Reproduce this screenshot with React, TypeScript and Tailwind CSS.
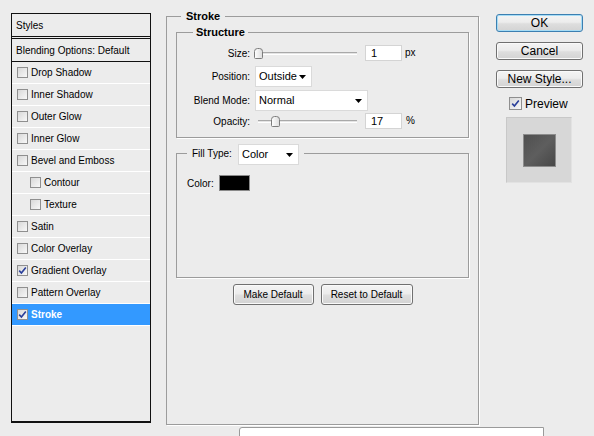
import React from 'react'

const effects = [
  { label: 'Drop Shadow' },
  { label: 'Inner Shadow' },
  { label: 'Outer Glow' },
  { label: 'Inner Glow' },
  { label: 'Bevel and Emboss' },
  { label: 'Contour', sub: true },
  { label: 'Texture', sub: true },
  { label: 'Satin' },
  { label: 'Color Overlay' },
  { label: 'Gradient Overlay', checked: true },
  { label: 'Pattern Overlay' },
  { label: 'Stroke', checked: true, active: true },
]

function CheckMark() {
  return (
    <svg width="9" height="9" viewBox="0 0 9 9">
      <path d="M1.2 4.6 L3.4 7 L7.8 1.4" fill="none" stroke="#2a3f9a" strokeWidth="1.6" />
    </svg>
  )
}

function Checkbox({ checked = false, big = false }: { checked?: boolean; big?: boolean }) {
  return (
    <span
      className={`flex shrink-0 items-center justify-center border border-[#8f8f8f] bg-[linear-gradient(135deg,#d8d8d8,#f8f8f8)] ${
        big ? 'h-[13px] w-[13px]' : 'h-[11px] w-[11px]'
      }`}
    >
      {checked && <CheckMark />}
    </span>
  )
}

function Arrow() {
  return (
    <svg width="7" height="4" viewBox="0 0 7 4">
      <path d="M0 0 H7 L3.5 4 Z" fill="#000" />
    </svg>
  )
}

function Dropdown({ value, className = '' }: { value: string; className?: string }) {
  return (
    <div className={`flex h-[21px] items-center justify-between border border-[#dadada] bg-white pl-[3px] pr-[5px] ${className}`}>
      <span className="text-[11px]">{value}</span>
      <Arrow />
    </div>
  )
}

function Slider({ pct }: { pct: number }) {
  return (
    <div className="relative ml-[3px] flex h-[12px] w-[99px] items-center">
      <div className="h-[3px] w-full border-t border-b border-t-[#a9a9a9] border-b-white bg-[#e4e4e4]" />
      <svg
        className="absolute top-[1px]"
        style={{ left: `${Math.round((pct / 100) * 99) - 4}px` }}
        width="9"
        height="11"
        viewBox="0 0 9 11"
      >
        <defs>
          <linearGradient id={`th${pct}`} x1="0" y1="0" x2="1" y2="0">
            <stop offset="0" stopColor="#ffffff" />
            <stop offset="1" stopColor="#dcdcdc" />
          </linearGradient>
        </defs>
        <path
          d="M3.5 0.5 H5.5 Q8.5 0.5 8.5 3.5 V9.5 Q8.5 10.5 7.5 10.5 H1.5 Q0.5 10.5 0.5 9.5 V3.5 Q0.5 0.5 3.5 0.5 Z"
          fill={`url(#th${pct})`}
          stroke="#7c7c7c"
        />
      </svg>
    </div>
  )
}

function Field({ value }: { value: string }) {
  return (
    <div className="ml-[8px] flex h-[16px] w-[37px] items-center border border-[#d4d4d4] bg-white pl-[5px] text-[11px]">
      {value}
    </div>
  )
}

function Btn({ children, className = '', focus = false }: { children: React.ReactNode; className?: string; focus?: boolean }) {
  return (
    <button
      className={`flex items-center justify-center rounded-[3px] border bg-[linear-gradient(#f4f4f4_0%,#ececec_45%,#dedede_55%,#d3d3d3_100%)] leading-none text-black ${
        focus ? 'border-[#3c7fb1] shadow-[inset_0_0_0_1px_#a6dcf5]' : 'border-[#707070] shadow-[inset_0_0_0_1px_#fafafa]'
      } ${className}`}
    >
      {children}
    </button>
  )
}

export default function App() {
  return (
    <div className="relative flex h-[436px] w-[594px] items-start overflow-hidden bg-[#ececec] font-['Liberation_Sans',Arial,sans-serif] text-[10px] text-black">
      {/* styles list */}
      <div className="ml-[11px] mt-[13px] flex h-[410px] w-[140px] flex-col border border-b-2 border-[#111]">
        <div className="flex h-[23px] items-center border-b border-[#111] pl-[4px]">Styles</div>
        <div className="mt-[1px] flex h-[24px] items-center border-y border-[#111] pl-[4px]">Blending Options: Default</div>
        {effects.map((e) => (
          <div
            key={e.label}
            className={`flex h-[22px] items-center gap-[3px] border-b border-white ${e.sub ? 'pl-[18px]' : 'pl-[5px]'} ${
              e.active ? 'bg-[#3399ff] font-bold text-white' : ''
            }`}
          >
            <Checkbox checked={e.checked} />
            <span>{e.label}</span>
          </div>
        ))}
      </div>

      {/* stroke settings */}
      <div className="relative ml-[15px] mt-[16px] h-[409px] w-[313px] border border-[#9c9c9c] pl-[9px] pt-[15px] shadow-[1px_1px_0_#fff]">
        <span className="absolute -top-[8px] left-[14px] bg-[#ececec] px-[5px] text-[11px] font-bold leading-[14px]">Stroke</span>

        <div className="relative h-[106px] w-[293px] border border-[#9c9c9c] pt-[10px] shadow-[1px_1px_0_#fff]">
          <span className="absolute -top-[8px] left-[16px] bg-[#ececec] px-[3px] text-[11px] font-bold leading-[14px]">Structure</span>

          <div className="flex h-[20px] items-center">
            <span className="w-[73px] text-right">Size:</span>
            <span className="ml-[5px] flex items-center">
              <Slider pct={0} />
              <Field value="1" />
              <span className="-mt-[2px] ml-[3px] text-[10px]">px</span>
            </span>
          </div>
          <div className="mt-[3px] flex h-[21px] items-center">
            <span className="w-[73px] text-right">Position:</span>
            <Dropdown value="Outside" className="ml-[5px] w-[57px]" />
          </div>
          <div className="mt-[3px] flex h-[21px] items-center">
            <span className="w-[73px] text-right">Blend Mode:</span>
            <Dropdown value="Normal" className="ml-[5px] w-[113px]" />
          </div>
          <div className="mt-[1px] flex h-[18px] items-center">
            <span className="w-[73px] text-right">Opacity:</span>
            <span className="ml-[5px] flex items-center">
              <Slider pct={17} />
              <Field value="17" />
              <span className="-mt-[2px] ml-[4px] text-[10px]">%</span>
            </span>
          </div>
        </div>

        <div className="relative mt-[15px] h-[125px] w-[293px] border border-[#9c9c9c] pl-[10px] pt-[21px] shadow-[1px_1px_0_#fff]">
          <div className="absolute -top-[10px] left-[10px] flex items-center bg-[#ececec] px-[5px]">
            <span className="-mt-[2px] w-[41px]">Fill Type:</span>
            <Dropdown value="Color" className="ml-[5px] w-[61px]" />
          </div>
          <div className="flex items-center">
            <span className="w-[27px]">Color:</span>
            <span className="ml-[5px] h-[16px] w-[31px] border border-[#8a8a8a] bg-black" />
          </div>
        </div>

        <div className="mt-[6px] flex w-[293px] justify-center gap-[7px]">
          <Btn className="h-[21px] w-[81px] text-[10px]">Make Default</Btn>
          <Btn className="h-[21px] w-[92px] text-[10px]">Reset to Default</Btn>
        </div>
      </div>

      {/* dialog buttons */}
      <div className="ml-[17px] mt-[14px] flex w-[87px] flex-col text-[12px]">
        <Btn focus className="h-[18px] w-[87px] text-[12px]">OK</Btn>
        <Btn className="mt-[10px] h-[18px] w-[87px] text-[12px]">Cancel</Btn>
        <Btn className="mt-[10px] h-[18px] w-[87px] text-[12px]">New Style...</Btn>
        <div className="ml-[13px] mt-[9px] flex h-[13px] items-center gap-[3px]">
          <Checkbox checked big />
          <span>Preview</span>
        </div>
        <div className="ml-[10px] mt-[7px] flex h-[66px] w-[66px] items-center justify-center border border-[#c8c8c8] border-b-[#e2e2e2] border-r-[#e2e2e2] bg-[#d7d7d7]">
          <div className="h-[33px] w-[33px] border border-[#8c8c8c] bg-[linear-gradient(135deg,#4f4f4f,#5e5e5e_50%,#474747)]" />
        </div>
      </div>

      <div className="absolute left-[239px] top-[427px] h-[20px] w-[305px] rounded-tl-[3px] border border-[#9a9a9a] bg-white" />
    </div>
  )
}
